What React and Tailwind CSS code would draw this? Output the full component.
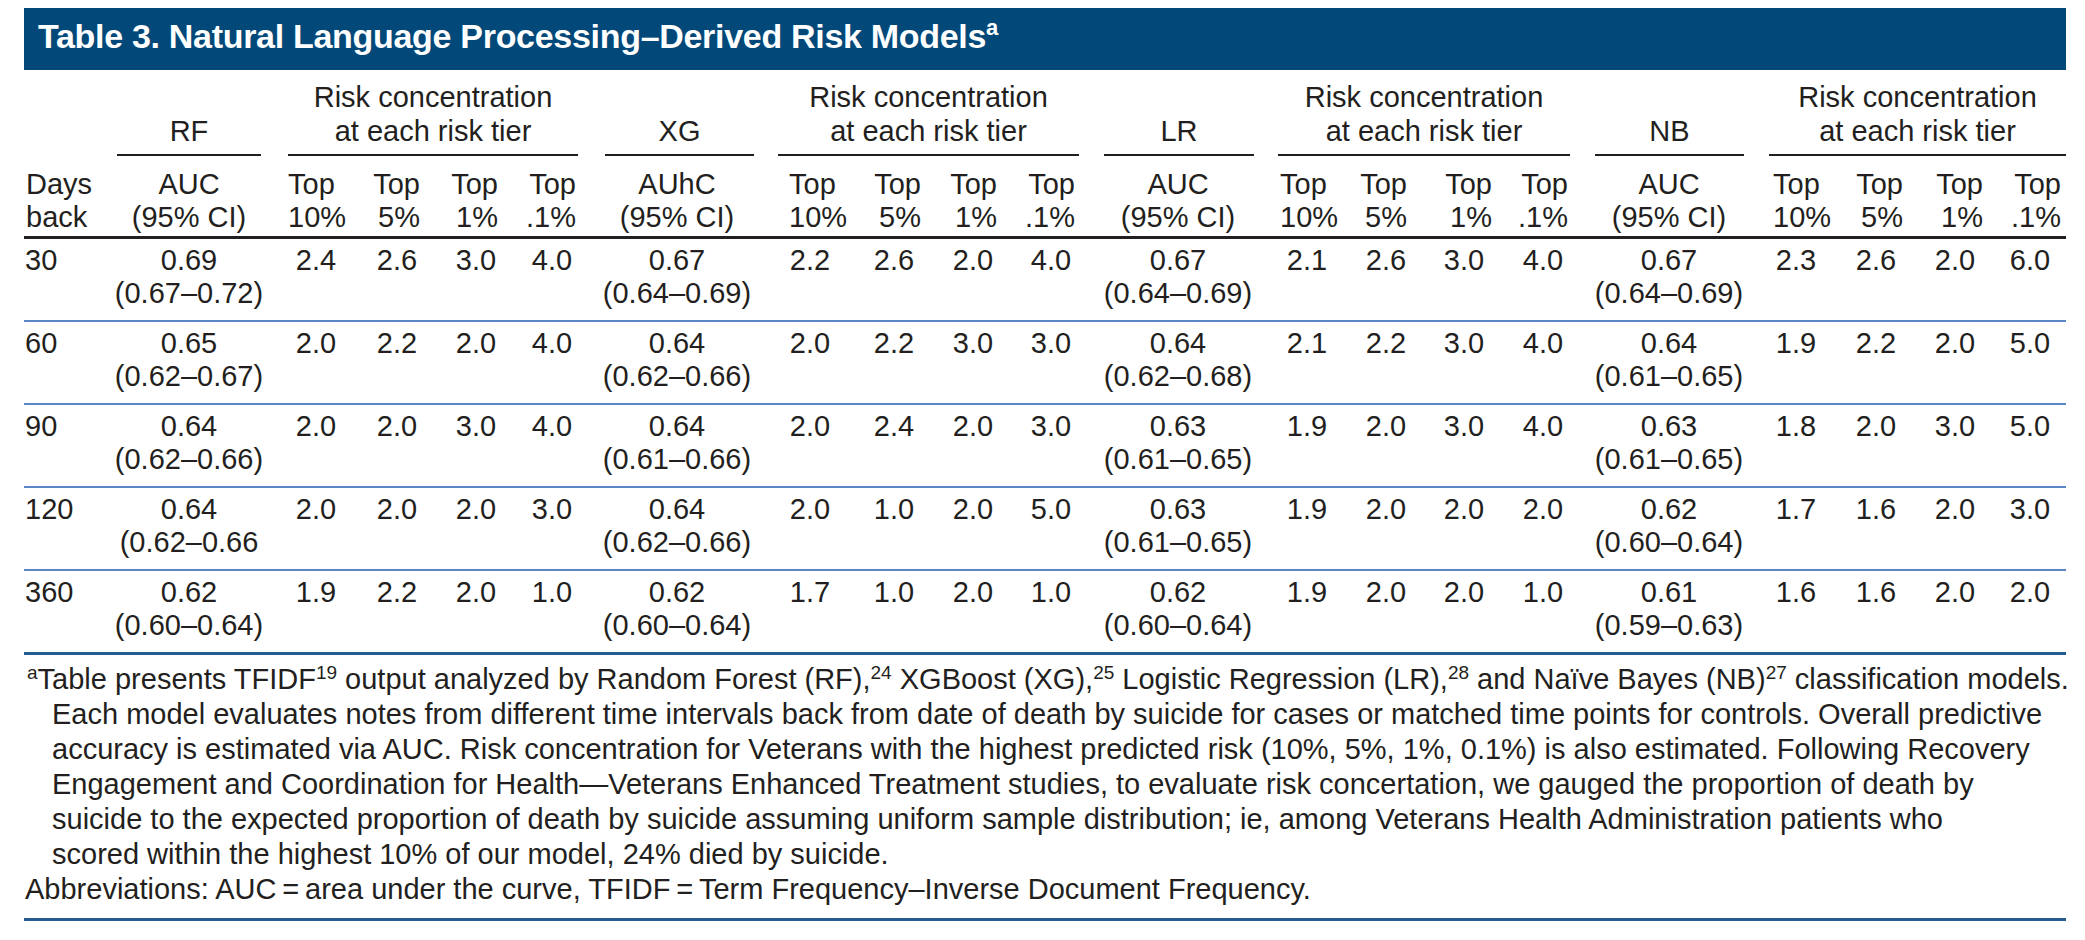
import React from "react";

const models = [
  {
    name: "RF",
    auc: "AUC",
    col: "w-[170px]",
    ul: "ml-[13px] mr-[13px]",
    sub: ["w-[84px]", "w-[78px]", "w-[80px]", "w-[72px]"],
    rul: "ml-[14px] mr-[10px]",
    hd: ["text-left pl-[14px]", "text-right pr-[16px]", "text-right pr-[18px]", "text-right pr-[12px]"],
  },
  {
    name: "XG",
    auc: "AUhC",
    col: "w-[178px]",
    ul: "ml-[17px] mr-[12px]",
    sub: ["w-[88px]", "w-[80px]", "w-[78px]", "w-[78px]"],
    rul: "ml-[12px] mr-[11px]",
    hd: ["text-left pl-[23px]", "text-right pr-[13px]", "text-right pr-[15px]", "text-right pr-[15px]"],
  },
  {
    name: "LR",
    auc: "AUC",
    col: "w-[176px]",
    ul: "ml-[14px] mr-[12px]",
    sub: ["w-[82px]", "w-[76px]", "w-[80px]", "w-[78px]"],
    rul: "ml-[12px] mr-[12px]",
    hd: ["text-left pl-[14px]", "text-right pr-[17px]", "text-right pr-[12px]", "text-right pr-[14px]"],
  },
  {
    name: "NB",
    auc: "AUC",
    col: "w-[174px]",
    ul: "ml-[13px] mr-[12px]",
    sub: ["w-[80px]", "w-[80px]", "w-[78px]", "w-[72px]"],
    rul: "ml-[13px] mr-0",
    hd: ["text-left pl-[17px]", "text-right pr-[13px]", "text-right pr-[11px]", "text-right pr-[5px]"],
  },
];

const tiers = [
  ["Top", "10%"],
  ["Top", "5%"],
  ["Top", "1%"],
  ["Top", ".1%"],
];

// days, then per model: [auc, ci, t10, t5, t1, t01]
const rows = [
  ["30", [
    ["0.69", "(0.67–0.72)", "2.4", "2.6", "3.0", "4.0"],
    ["0.67", "(0.64–0.69)", "2.2", "2.6", "2.0", "4.0"],
    ["0.67", "(0.64–0.69)", "2.1", "2.6", "3.0", "4.0"],
    ["0.67", "(0.64–0.69)", "2.3", "2.6", "2.0", "6.0"],
  ]],
  ["60", [
    ["0.65", "(0.62–0.67)", "2.0", "2.2", "2.0", "4.0"],
    ["0.64", "(0.62–0.66)", "2.0", "2.2", "3.0", "3.0"],
    ["0.64", "(0.62–0.68)", "2.1", "2.2", "3.0", "4.0"],
    ["0.64", "(0.61–0.65)", "1.9", "2.2", "2.0", "5.0"],
  ]],
  ["90", [
    ["0.64", "(0.62–0.66)", "2.0", "2.0", "3.0", "4.0"],
    ["0.64", "(0.61–0.66)", "2.0", "2.4", "2.0", "3.0"],
    ["0.63", "(0.61–0.65)", "1.9", "2.0", "3.0", "4.0"],
    ["0.63", "(0.61–0.65)", "1.8", "2.0", "3.0", "5.0"],
  ]],
  ["120", [
    ["0.64", "(0.62–0.66", "2.0", "2.0", "2.0", "3.0"],
    ["0.64", "(0.62–0.66)", "2.0", "1.0", "2.0", "5.0"],
    ["0.63", "(0.61–0.65)", "1.9", "2.0", "2.0", "2.0"],
    ["0.62", "(0.60–0.64)", "1.7", "1.6", "2.0", "3.0"],
  ]],
  ["360", [
    ["0.62", "(0.60–0.64)", "1.9", "2.2", "2.0", "1.0"],
    ["0.62", "(0.60–0.64)", "1.7", "1.0", "2.0", "1.0"],
    ["0.62", "(0.60–0.64)", "1.9", "2.0", "2.0", "1.0"],
    ["0.61", "(0.59–0.63)", "1.6", "1.6", "2.0", "2.0"],
  ]],
];

const Sup = ({ children }) => (
  <sup className="text-[19px] top-[-0.55em]">{children}</sup>
);

export default function App() {
  return (
    <div className="w-[2085px] h-[940px] bg-white text-[#231f20] font-['Liberation_Sans',Arial,sans-serif]">
      <div className="ml-[24px] w-[2042px] pt-[8px]">
        {/* title bar */}
        <div className="h-[62px] bg-[#02497a] pl-[14px] pt-[9px] text-white font-bold text-[34px] leading-[38px] tracking-[-0.3px] whitespace-nowrap">
          Table 3. Natural Language Processing–Derived Risk Models
          <sup className="text-[22px] top-[-0.6em] font-bold">a</sup>
        </div>

        <table className="table-fixed border-collapse w-[2042px] text-[29px]">
          <colgroup>
            <col className="w-[80px]" />
            {models.map((m) => (
              <React.Fragment key={m.name}>
                <col className={m.col} />
                {m.sub.map((w, i) => (
                  <col key={i} className={w} />
                ))}
              </React.Fragment>
            ))}
          </colgroup>
          <thead>
            <tr className="leading-[34px]">
              <th className="p-0" />
              {models.map((m) => (
                <React.Fragment key={m.name}>
                  <th className="p-0 pt-[10px] align-bottom font-normal">
                    <div className={`${m.ul} pb-[6px] border-b-2 border-[#231f20] text-center`}>
                      {m.name}
                    </div>
                  </th>
                  <th colSpan={4} className="p-0 pt-[10px] align-bottom font-normal">
                    <div className={`${m.rul} pb-[6px] border-b-2 border-[#231f20] text-center`}>
                      Risk concentration
                      <br />
                      at each risk tier
                    </div>
                  </th>
                </React.Fragment>
              ))}
            </tr>
            <tr className="leading-[33px] border-b-[3px] border-[#231f20]">
              <th className="p-0 pt-[12px] pb-[2px] pl-[2px] text-left font-normal align-top">
                Days
                <br />
                back
              </th>
              {models.map((m) => (
                <React.Fragment key={m.name}>
                  <th className="p-0 pt-[12px] pb-[2px] text-center font-normal align-top">
                    {m.auc}
                    <br />
                    (95% CI)
                  </th>
                  {tiers.map((t, i) => (
                    <th
                      key={i}
                      className={`p-0 pt-[12px] pb-[2px] font-normal align-top ${m.hd[i]}`}
                    >
                      {t[0]}
                      <br />
                      {t[1]}
                    </th>
                  ))}
                </React.Fragment>
              ))}
            </tr>
          </thead>
          <tbody>
            {rows.map(([days, vals], r) => (
              <tr
                key={days}
                className={`leading-[33px] ${
                  r < rows.length - 1 ? "border-b-2 border-[#5a86c4]" : ""
                }`}
              >
                <td className="p-0 pt-[5px] pb-[10px] pl-[1px] align-top">{days}</td>
                {vals.map((v, k) => (
                  <React.Fragment key={k}>
                    <td className="p-0 pt-[5px] pb-[10px] text-center align-top">
                      {v[0]}
                      <br />
                      {v[1]}
                    </td>
                    {v.slice(2).map((x, i) => (
                      <td key={i} className="p-0 pt-[5px] pb-[10px] text-center align-top">
                        {x}
                      </td>
                    ))}
                  </React.Fragment>
                ))}
              </tr>
            ))}
          </tbody>
        </table>

        {/* footnote */}
        <div className="border-t-[3px] border-b-[3px] border-[#245c8f] pt-[7px] pb-[11px] text-[29px] leading-[35px] whitespace-nowrap">
          <div className="pl-[28px] indent-[-25px]">
            <Sup>a</Sup>Table presents TFIDF<Sup>19</Sup> output analyzed by Random Forest (RF),<Sup>24</Sup> XGBoost (XG),<Sup>25</Sup> Logistic Regression (LR),<Sup>28</Sup> and Naïve Bayes (NB)<Sup>27</Sup> classification models.
            <br />
            Each model evaluates notes from different time intervals back from date of death by suicide for cases or matched time points for controls. Overall predictive
            <br />
            accuracy is estimated via AUC. Risk concentration for Veterans with the highest predicted risk (10%, 5%, 1%, 0.1%) is also estimated. Following Recovery
            <br />
            Engagement and Coordination for Health—Veterans Enhanced Treatment studies, to evaluate risk concertation, we gauged the proportion of death by
            <br />
            suicide to the expected proportion of death by suicide assuming uniform sample distribution; ie, among Veterans Health Administration patients who
            <br />
            scored within the highest 10% of our model, 24% died by suicide.
          </div>
          <div className="pl-[1px]">
            Abbreviations: AUC{"\u2009"}={"\u2009"}area under the curve, TFIDF{"\u2009"}={"\u2009"}Term Frequency–Inverse Document Frequency.
          </div>
        </div>
      </div>
    </div>
  );
}
